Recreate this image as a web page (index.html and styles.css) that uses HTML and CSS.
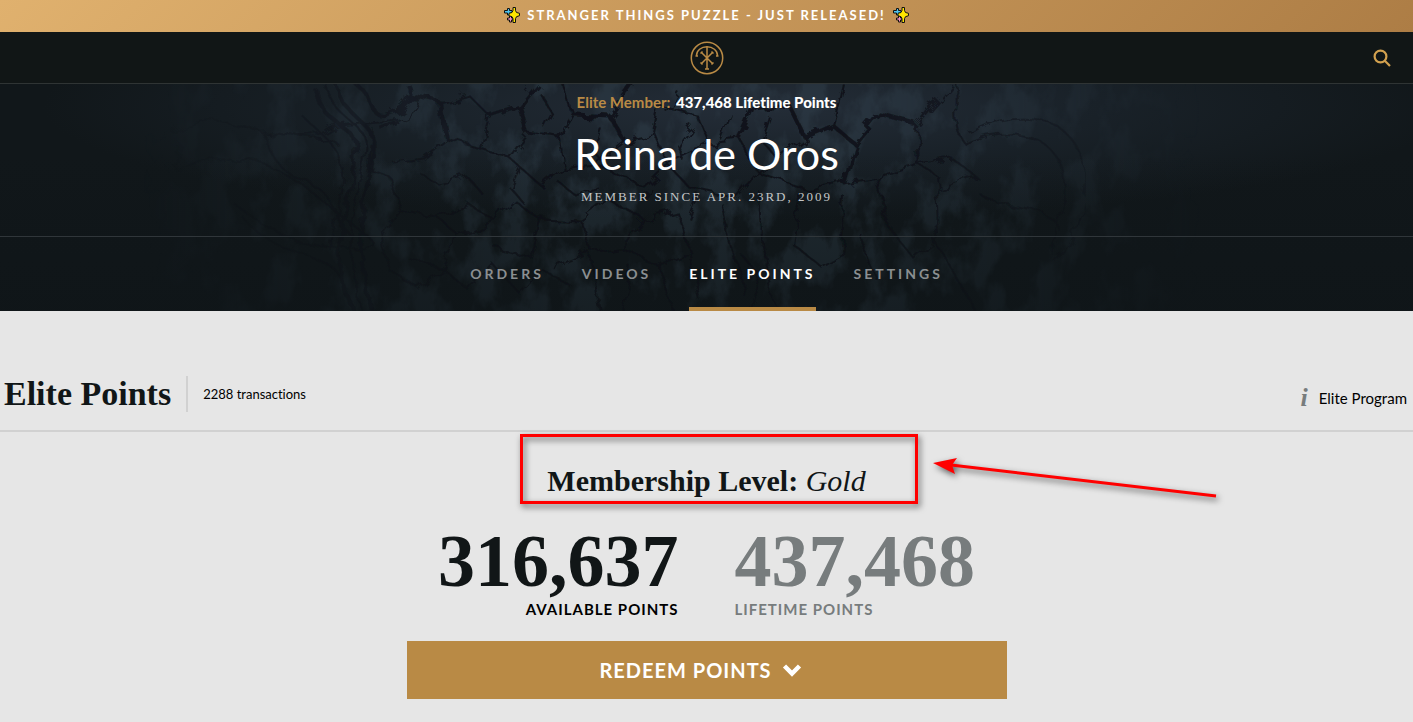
FILE: index.html
```html
<!DOCTYPE html>
<html lang="en">
<head>
    <meta charset="UTF-8">
    <meta name="viewport" content="width=device-width, initial-scale=1.0">
    <title>Elite Points</title>
    <link rel="stylesheet" href="styles.css">
</head>
<body>
    <svg class="defs" aria-hidden="true">
        <symbol id="sparkles" viewBox="0 0 16 16">
            <g stroke="#111" stroke-width="1" stroke-linejoin="round">
                <path d="M3.500 1.500h2v2h2.500v2.500H5.500v2h-2v-2h-3V3.500h3z" fill="#4fc3ee"/>
                <path d="M5.500 9h2v2h1.500v2H7.500v2h-2v-2h-2v-2h2z" fill="#f58fc0"/>
                <path d="M9 .5h2.500v3l1 2 3 .8v2.400l-3 1-1 2v3.800H9v-3.800l-1-2-3-1V6.300l3-.8 1-2z" fill="#ffe600"/>
            </g>
        </symbol>
    </svg>

    <div class="promo">
        <svg class="sparkles"><use href="#sparkles"/></svg>
        <span>STRANGER THINGS PUZZLE - JUST RELEASED!</span>
        <svg class="sparkles"><use href="#sparkles"/></svg>
    </div>

    <header class="topbar">
        <a class="logo" href="#" aria-label="Home">
            <svg viewBox="0 0 34 34" fill="none" stroke="#b98a45" stroke-width="1.500">
                <circle cx="17" cy="17" r="15.700"/>
                <path d="M6.500 14.500a10.500 8.800 0 0 1 21 0M5.500 15h2.500M26 15h2.500"/>
                <path d="M17 5.500v22M15 28h4M11.500 11.500l11 11M22.500 11.500l-11 11"/>
                <path d="M10.500 12.500l2-2M21.500 10.500l2 2M10.500 21.500l2 2M21.500 23.500l2-2"/>
            </svg>
        </a>
        <button class="search" type="button" aria-label="Search">
            <svg viewBox="0 0 18 18" fill="none" stroke="#d2a14f" stroke-width="2.200">
                <circle cx="7.500" cy="7.500" r="5.900"/>
                <path d="M11.800 11.800l5.200 5.200"/>
            </svg>
        </button>
    </header>

    <section class="hero">
        <svg class="marble" viewBox="0 0 1413 228" preserveAspectRatio="xMidYMid slice" aria-hidden="true">
            <defs>
                <filter id="rough" x="0" y="0" width="100%" height="100%">
                    <feTurbulence type="fractalNoise" baseFrequency=".045" numOctaves="4" seed="4"/>
                    <feDisplacementMap in="SourceGraphic" scale="16"/>
                </filter>
                <filter id="grain" x="0" y="0" width="100%" height="100%">
                    <feTurbulence type="fractalNoise" baseFrequency=".03 .02" numOctaves="6" seed="9"/>
                    <feColorMatrix values="0 0 0 0 .03  0 0 0 0 .05  0 0 0 0 .07  5 0 0 0 -2.300"/>
                </filter>
                <radialGradient id="glow" cx=".53" cy=".1" r=".5">
                    <stop offset="0" stop-color="#242d38"/>
                    <stop offset=".5" stop-color="#192128"/>
                    <stop offset="1" stop-color="#11171a"/>
                </radialGradient>
                <linearGradient id="fade">
                    <stop offset=".1" stop-color="#fff" stop-opacity="0"/>
                    <stop offset=".4" stop-color="#fff"/>
                    <stop offset=".6" stop-color="#fff"/>
                    <stop offset=".85" stop-color="#fff" stop-opacity="0"/>
                </linearGradient>
                <linearGradient id="shade" x2="0" y2="1">
                    <stop offset=".3" stop-color="#0e1417" stop-opacity="0"/>
                    <stop offset="1" stop-color="#0e1417" stop-opacity=".5"/>
                </linearGradient>
                <mask id="sides"><rect width="1413" height="228" fill="url(#fade)"/></mask>
            </defs>
            <rect width="1413" height="228" fill="url(#glow)"/>
            <rect width="1413" height="228" filter="url(#grain)" mask="url(#sides)" opacity=".5"/>
            <g mask="url(#sides)">
                <g class="veins" filter="url(#rough)">
                    <path d="M170 50C220 20 235 45 262 48s50 10 68-3 82 5 88-30M262 48c10 30 25 46 48 52s25 44 43 52M175 85c60-25 110 0 150 34s76 50 24 48-90-26-116-48M180 60c-8 20-6 30 0 26M240 130c20 30 60 38 80 46s30 30 34 50"/>
                    <path class="thick" d="M315 5c10 50 52 26 39 80s-20 80-2 143M335 0c14 46 46 30 36 80s-16 90 2 148"/>
                    <path d="M325 0c12 48 50 30 38 80s-18 86 0 148M290 50c16 10 44 0 50 14M300 30c26 26 40 30 42 60s-16 60-8 80"/>
                    <path class="thick" d="M355 0c20 12 12 34 30 30s30-20 22-30M380 44l18-6M405 12l36 8 6 36M489 32l30-10 8 28M519 22l18-22M573 30l36 2 16 26M609 32l22-32M741 56l14-30 34-4 16 32M805 54l28-12 22 18-12 40M855 60l24-30 36 10"/>
                    <path d="M372 44l-4 42 22 8 10 34-18 22 8 38M447 56l-24 18-31 4M441 20l28-8 20 20-8 34-34-10M527 50l-18 24-28-8M527 50l32 4 4 32-20 18-34-30M559 54l14-24-8-30M625 58l-30 24-32 4M625 58l30-8 12 30-24 22-48-20M655 50l6-26 36 8 12 28-42 20"/>
                    <path d="M709 60l32-4 18 34-22 24-48-10-22-24M805 54l-46 36M843 100l-30 8-54-18M833 42l10-42M915 40l2 40-40 14-34 6M877 94l12 50 24 30 26-22-2-60-20-12M917 40l34-40M917 80l34-6 26 20-40 12M400 128l36 4 22 20-14 32-36-10M436 132l30-14 30 20-38 14M496 138l20-20 24 18-8 38-36-8M540 136l42 2 10 30-40 16M582 138l28-20 34 18-22 30-30 2M644 136l32-8 14 40-32 14-36-16M690 168l10 50M720 118l10 42 16 54M760 108l2 46 14 70M800 110l-8 50 30 24 20-12 2-60"/>
                    <path d="M420 90l20 12 28-8 14 16M540 10l12 20-8 14M600 44l-8 22 12 14M680 10l-12 20M690 40l-14 20 8 18M730 30l-10 26M770 34l-8 24 14 16M520 84l-10 20 14 16M560 100l16 12 22-8M650 104l-10 14M700 112l-10 24"/>
                    <path d="M390 188l28 16 24-20 26 22 24-26 26 28 22-24 32 20M590 170l10 58M630 182l-8 46M658 182l16 46M740 170l20 22-8 36M860 150l16 46M930 152c20 30 34 56 46 76M970 50c40-26 94-20 110 20s-8 90-24 110M965 60c50-22 90-6 98 30s-16 60-8 84M980 110c20 24 74 6 82 40M955 0c6 18-6 42 10 60"/>
                </g>
            </g>
            <rect width="1413" height="228" fill="url(#shade)"/>
        </svg>
        <div class="profile">
            <p class="tier">Elite Member: <strong>437,468 Lifetime Points</strong></p>
            <h1>Reina de Oros</h1>
            <p class="since">MEMBER SINCE APR. 23RD, 2009</p>
        </div>
        <nav class="tabs">
            <a href="#">ORDERS</a>
            <a href="#">VIDEOS</a>
            <a class="active" href="#">ELITE POINTS</a>
            <a href="#">SETTINGS</a>
        </nav>
    </section>

    <main>
        <div class="section-head">
            <h2>Elite Points</h2>
            <span class="count">2288 transactions</span>
            <a class="program" href="#"><i>i</i>Elite Program</a>
        </div>

        <section class="points">
            <h3>Membership Level: <em>Gold</em></h3>
            <div class="highlight"></div>
            <svg class="arrow" viewBox="0 0 290 50" aria-hidden="true">
                <path d="M18 9L283 40" stroke="#f00" stroke-width="3"/>
                <path d="M0 7l24-5-5 7 3 9z" fill="#f00"/>
            </svg>

            <div class="totals">
                <div class="total available">
                    <strong>316,637</strong>
                    <span>AVAILABLE POINTS</span>
                </div>
                <div class="total lifetime">
                    <strong>437,468</strong>
                    <span>LIFETIME POINTS</span>
                </div>
            </div>

            <button class="redeem" type="button">
                REDEEM POINTS
                <svg viewBox="0 0 20 14" fill="none" stroke="#fff" stroke-width="4.500"><path d="M2.500 3l7.500 7.500L17.500 3"/></svg>
            </button>
        </section>
    </main>
</body>
</html>
```
FILE: styles.css
```css
* { box-sizing: border-box; }
body { margin: 0; background: #e6e6e6; color: #111617; font-family: Lato, "Open Sans", sans-serif; font-variant-ligatures: none; }
h1, h2, h3, p { margin: 0; }
a { color: inherit; text-decoration: none; }
button { border: none; cursor: pointer; font-family: inherit; }
svg { display: block; }
.defs { position: absolute; width: 0; height: 0; }

.promo { display: flex; justify-content: center; align-items: center; gap: 7px; height: 32px; padding-bottom: 2px; background: linear-gradient(135deg, #e0b16e, #ad7d45); color: #fff; font-size: 13px; font-weight: bold; letter-spacing: 2px; }
.sparkles { width: 16px; height: 16px; }

.topbar { display: grid; grid-template-columns: 1fr auto 1fr; align-items: center; height: 52px; padding: 0 22px; background: #111616; border-bottom: 1px solid #2f3434; }
.logo { grid-column: 2; }
.logo svg { width: 34px; height: 34px; }
.search { justify-self: end; padding: 0; background: none; }
.search svg { width: 18px; height: 18px; }

.hero { position: relative; background: #11171a; text-align: center; }
.marble { position: absolute; top: 0; left: 0; width: 100%; height: 100%; }
.veins { fill: none; stroke: #0c1115; stroke-width: 2; opacity: .8; }
.thick { stroke-width: 4; }
.profile { position: relative; height: 153px; padding-top: 8px; border-bottom: 1px solid #30363a; }
.tier { color: #b98a45; font-size: 15px; line-height: 20px; font-weight: bold; }
.tier strong { margin-left: 2px; color: #fff; }
.profile h1 { margin-top: 12px; color: #fff; font-size: 43px; line-height: 60px; font-weight: normal; }
.since { margin-top: 4px; color: #c3c6c7; font-family: "Liberation Serif", serif; font-size: 13px; line-height: 18px; letter-spacing: 2px; }
.tabs { position: relative; display: flex; justify-content: center; gap: 38px; }
.tabs a { height: 74px; border-bottom: 4px solid transparent; color: #8b8f91; font-size: 14px; line-height: 74px; font-weight: bold; letter-spacing: 3px; }
.tabs .active { border-color: #b98a45; color: #fff; }

.section-head { display: flex; align-items: center; margin-top: 48px; padding: 17px 6px 18px 4px; border-bottom: 2px solid #d1d1d1; }
.section-head h2 { font-family: "Liberation Serif", serif; font-size: 34px; line-height: 36px; }
.count { margin-left: 15px; padding-left: 15px; border-left: 2px solid #d1d1d1; color: #000; font-size: 13px; line-height: 36px; }
.program { display: flex; align-items: center; gap: 11px; margin-left: auto; padding-top: 8px; color: #000; font-size: 15px; line-height: 26px; }
.program i { color: #777c7d; font-family: "Liberation Serif", serif; font-size: 26px; font-weight: bold; }

.points { position: relative; padding-top: 30px; text-align: center; }
.points h3 { font-family: "Liberation Serif", serif; font-size: 30px; line-height: 38px; }
.points em { font-weight: normal; }
.highlight { position: absolute; top: 2px; left: calc(50% - 187px); width: 398px; height: 70px; border: 3px solid #f00; filter: drop-shadow(2px 3px 3px rgba(0, 0, 0, .6)); }
.arrow { position: absolute; top: 24px; left: calc(50% + 226px); width: 290px; height: 50px; filter: drop-shadow(2px 3px 3px rgba(0, 0, 0, .6)); }

.totals { display: grid; grid-template-columns: 1fr 1fr; gap: 56px; margin-top: 28px; }
.total strong { display: block; margin-bottom: 4px; font-family: "Liberation Serif", serif; font-size: 74px; line-height: 66px; }
.total span { display: block; font-size: 15px; line-height: 22px; font-weight: bold; letter-spacing: 1px; }
.available { text-align: right; }
.available span { color: #000; }
.lifetime { color: #777c7d; text-align: left; }
.redeem { display: flex; justify-content: center; align-items: center; gap: 10px; width: 100%; max-width: 600px; height: 58px; margin: 21px auto 23px; padding: 0 12px 0 0; background: #b98a45; color: #fff; font-size: 20px; font-weight: bold; letter-spacing: 1px; }
.redeem svg { width: 20px; height: 14px; }
```
